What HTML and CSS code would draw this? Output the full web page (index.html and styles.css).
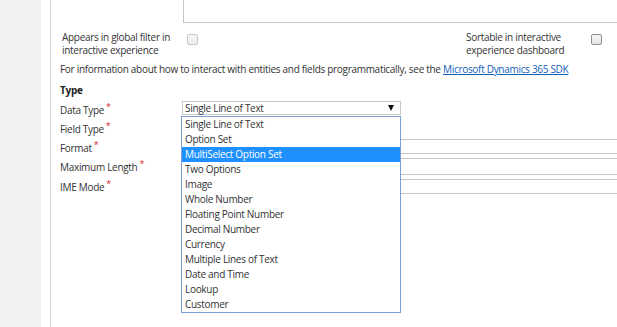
FILE: index.html
```html
<!DOCTYPE html>
<html lang="en">
<head>
<meta charset="utf-8">
<title>Field properties</title>
<link rel="stylesheet" href="styles.css">
</head>
<body>
<div class="page">
  <aside class="side"></aside>
  <main class="content">
    <div class="textarea-row"><div class="textarea"></div></div>
    <div class="flags">
      <div class="flag">
        <span class="flag-label">Appears in global filter in<br>interactive experience</span>
        <span class="checkbox disabled"></span>
      </div>
      <div class="flag">
        <span class="flag-label">Sortable in interactive<br>experience dashboard</span>
        <span class="checkbox"></span>
      </div>
    </div>
    <p class="info">For information about how to interact with entities and fields programmatically, see the <a href="#">Microsoft Dynamics 365 SDK</a></p>
    <h3 class="section">Type</h3>
    <div class="form">
      <div class="row">
        <label class="label">Data Type<span class="req">*</span></label>
        <div class="select">Single Line of Text<span class="arrow"></span>
          <ul class="options">
            <li>Single Line of Text</li>
            <li>Option Set</li>
            <li class="active">MultiSelect Option Set</li>
            <li>Two Options</li>
            <li>Image</li>
            <li>Whole Number</li>
            <li>Floating Point Number</li>
            <li>Decimal Number</li>
            <li>Currency</li>
            <li>Multiple Lines of Text</li>
            <li>Date and Time</li>
            <li>Lookup</li>
            <li>Customer</li>
          </ul>
        </div>
      </div>
      <div class="row">
        <label class="label">Field Type<span class="req">*</span></label>
        <div class="select narrow"></div>
      </div>
      <div class="row">
        <label class="label">Format<span class="req">*</span></label>
        <div class="input"></div>
      </div>
      <div class="row tall">
        <label class="label">Maximum Length<span class="req">*</span></label>
        <div class="input input-tall"></div>
      </div>
      <div class="row tall">
        <label class="label">IME Mode<span class="req">*</span></label>
        <div class="input input-low"></div>
      </div>
    </div>
  </main>
</div>
</body>
</html>
```
FILE: styles.css
```css
* { box-sizing: border-box; }
html, body { margin: 0; padding: 0; }
body {
  width: 617px;
  height: 327px;
  overflow: hidden;
  background: #fff;
  font-family: "Open Sans", "Noto Sans", sans-serif;
  font-size: 10px;
  letter-spacing: -0.3px;
  color: #333;
}
.page { display: flex; height: 327px; }
.side { width: 41px; flex: none; background: #f2f2f2; }
.content {
  flex: 1;
  margin-left: 9px;
  border-left: 1px solid #d9d9d9;
  padding-left: 9px;
  min-width: 0;
}
.textarea-row { display: flex; }
.textarea {
  margin-left: 123px;
  flex: 1;
  height: 23px;
  margin-right: -10px;
  border: 1px solid #c6c6c6;
  border-top: none;
}
.flags {
  display: grid;
  grid-template-columns: 404px auto;
  padding-left: 2px;
  margin-top: 8px;
}
.flag { display: flex; align-items: flex-start; }
.flag-label { width: 125px; line-height: 13px; }
.checkbox {
  width: 11px;
  height: 11px;
  margin-top: 3px;
  border: 1px solid #8f8f8f;
  border-radius: 2px;
  background: linear-gradient(#f6f6f6, #e4e4e4);
}
.checkbox.disabled { border-color: #c8c8c8; background: linear-gradient(#f8f8f8, #ececec); }
.info { margin: 5px 0 0; line-height: 14px; white-space: nowrap; }
.info a { color: #1160b7; text-decoration: underline; }
.section { margin: 7px 0 0; font-size: 10px; font-weight: bold; line-height: 14px; color: #222; }
.form { margin-top: 4px; }
.row { display: flex; height: 19px; align-items: flex-start; }
.row.tall { height: 20px; }
.label { width: 122px; flex: none; padding-top: 2px; line-height: 14px; }
.req { color: #d42c2c; font-size: 9px; vertical-align: top; position: relative; top: -3px; margin-left: 2px; }
.select {
  position: relative;
  width: 219px;
  height: 14px;
  border: 1px solid #c6c6c6;
  padding-left: 2px;
  line-height: 12px;
  z-index: 2;
}
.select.narrow { z-index: 0; }
.arrow {
  position: absolute;
  right: 6px;
  top: 3px;
  width: 0;
  height: 0;
  border-left: 3px solid transparent;
  border-right: 3px solid transparent;
  border-top: 6px solid #111;
}
.options {
  position: absolute;
  left: -2px;
  top: 14px;
  width: 220px;
  margin: 0;
  padding: 0;
  list-style: none;
  background: #fff;
  border: 1px solid #7b9ed6;
}
.options li { height: 15px; line-height: 15px; padding-left: 3px; white-space: nowrap; }
.options li.active { background: #1e90ff; color: #fff; }
.input {
  flex: 1;
  height: 15px;
  margin-right: -10px;
  border: 1px solid #c6c6c6;
}
.input-tall { height: 17px; }
.input-low { margin-top: 1px; }
```
